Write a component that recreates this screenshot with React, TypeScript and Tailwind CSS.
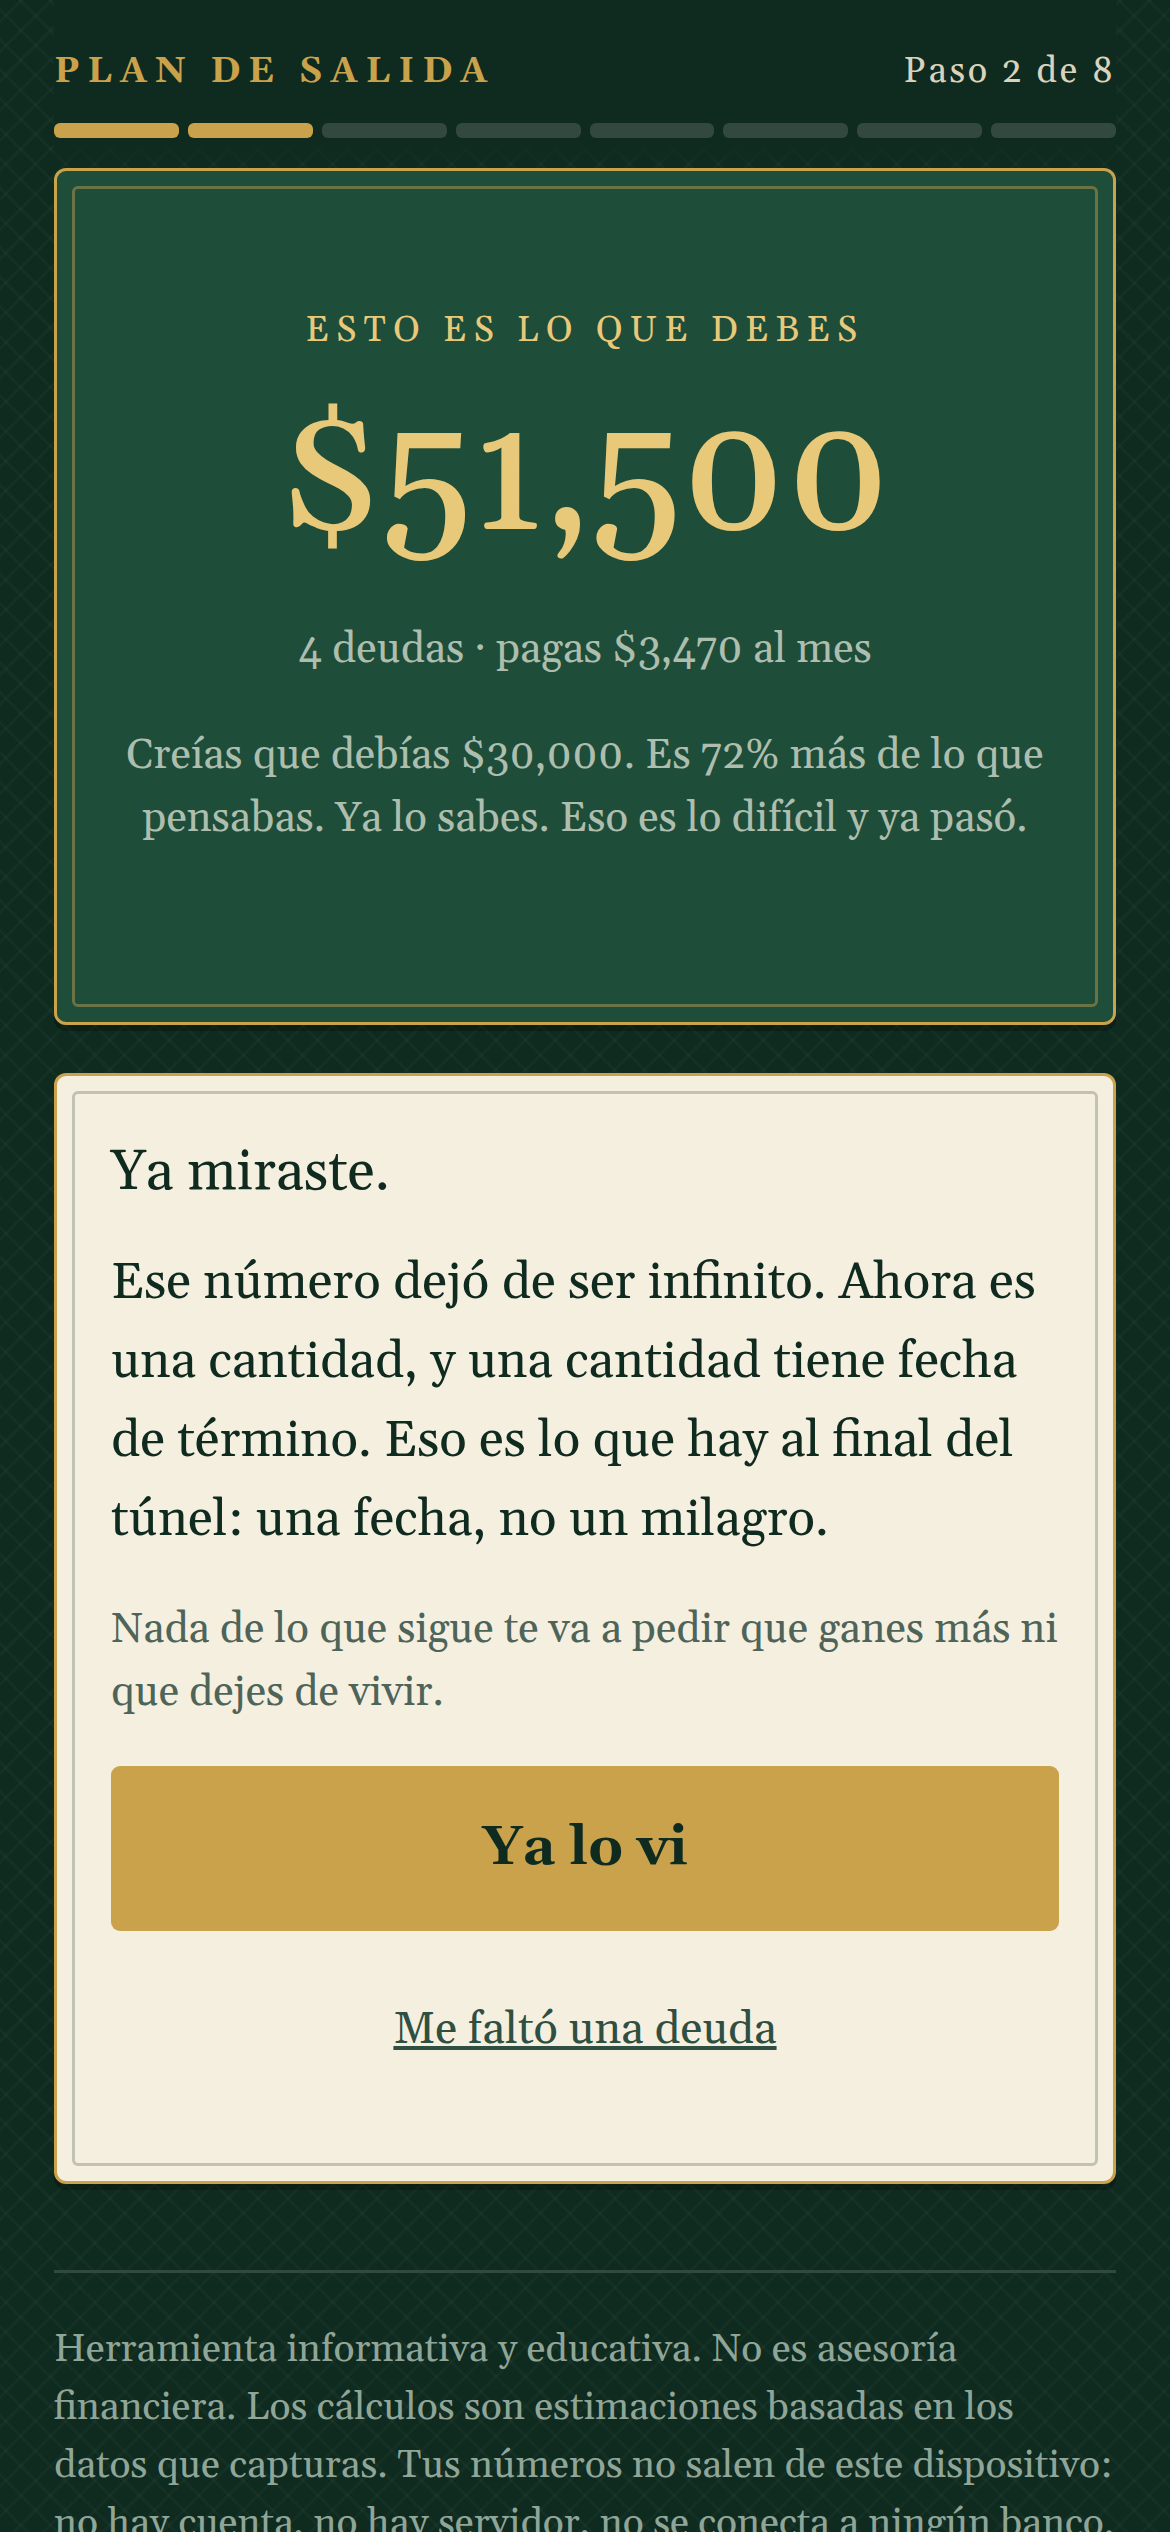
const bars = [true, true, false, false, false, false, false, false];

export default function App() {
  return (
    <div className="h-[2532px] overflow-hidden bg-[#0f2a1f] bg-[image:repeating-linear-gradient(45deg,transparent_0,transparent_18px,rgba(255,255,255,0.022)_18px,rgba(255,255,255,0.022)_21px),repeating-linear-gradient(-45deg,transparent_0,transparent_18px,rgba(255,255,255,0.022)_18px,rgba(255,255,255,0.022)_21px)] [font-family:Gelasio,Georgia,serif]">
      <div className="px-[54px]">
        <header className="bg-[linear-gradient(to_bottom,#0f2a1f_85%,transparent)] pt-[51px] pb-[30px]">
          <div className="flex items-center justify-between h-[42px]">
            <span className="text-[36px] font-bold tracking-[0.22em] text-[#c9a24b] leading-[42px]">PLAN DE SALIDA</span>
            <span className="text-[36px] tracking-[0.08em] text-[#d9d2bd] leading-[42px]">Paso 2 de 8</span>
          </div>
          <div className="mt-[30px] flex gap-[9px]">
            {bars.map((on, i) => (
              <div key={i} className={on ? "h-[15px] flex-1 rounded-[6px] bg-[#c9a24b]" : "h-[15px] flex-1 rounded-[6px] bg-[#33493f]"} />
            ))}
          </div>
        </header>

        <section className="relative h-[857px] rounded-[12px] border-[3px] border-[#c9a24b] bg-[#1e4d39] px-[54px] shadow-[0_6px_0_rgba(0,0,0,0.25)] text-center">
          <div className="absolute inset-[15px] rounded-[6px] border-[3px] border-[#6b7345]" />
          <div className="pt-[139px] text-[36px] leading-[42px] tracking-[0.2em] text-[#e8c97a]">ESTO ES LO QUE DEBES</div>
          <div className="mt-[30px] text-[166px] font-medium leading-[198px] text-[#e8c97a]">$51,500</div>
          <div className="mt-[43px] text-[42px] leading-[54px] text-[#adbdae]">4 deudas · pagas $3,470 al mes</div>
          <p className="mt-[47px] text-[42px] leading-[63px] text-[#adbdae]">Creías que debías $30,000. Es 72% más de lo que pensabas. Ya lo sabes. Eso es lo difícil y ya pasó.</p>
        </section>

        <section className="relative mt-[48px] h-[1111px] rounded-[12px] border-[3px] border-[#c9a24b] bg-[#f5efe0] px-[54px] pt-[58px] shadow-[0_6px_0_rgba(0,0,0,0.25)]">
          <div className="absolute inset-[15px] rounded-[6px] border-[3px] border-[#c0c2b4]" />
          <h2 className="text-[56px] leading-[78px] text-[#0f2a1f]">Ya miraste.</h2>
          <p className="mt-[32px] text-[51px] leading-[79px] text-[#0f2a1f]">Ese número dejó de ser infinito. Ahora es una cantidad, y una cantidad tiene fecha de término. Eso es lo que hay al final del túnel: una fecha, no un milagro.</p>
          <p className="mt-[38px] text-[42px] leading-[63px] text-[#4f6459]">Nada de lo que sigue te va a pedir que ganes más ni que dejes de vivir.</p>
          <button className="relative mt-[42px] block h-[165px] w-full rounded-[9px] bg-[#c9a24b] text-[55px] font-bold text-[#0f2a1f]">Ya lo vi</button>
          <div className="relative mt-[72px] text-center text-[45px] leading-[54px] text-[#2f4f42] underline">Me faltó una deuda</div>
        </section>

        <footer className="mt-[86px] border-t-[3px] border-[#33493f] pt-[48px] text-[39px] leading-[58px] text-[#8fa598]">
          Herramienta informativa y educativa. No es asesoría financiera. Los cálculos son estimaciones basadas en los datos que capturas. Tus números no salen de este dispositivo: no hay cuenta, no hay servidor, no se conecta a ningún banco.
        </footer>
      </div>
    </div>
  );
}
